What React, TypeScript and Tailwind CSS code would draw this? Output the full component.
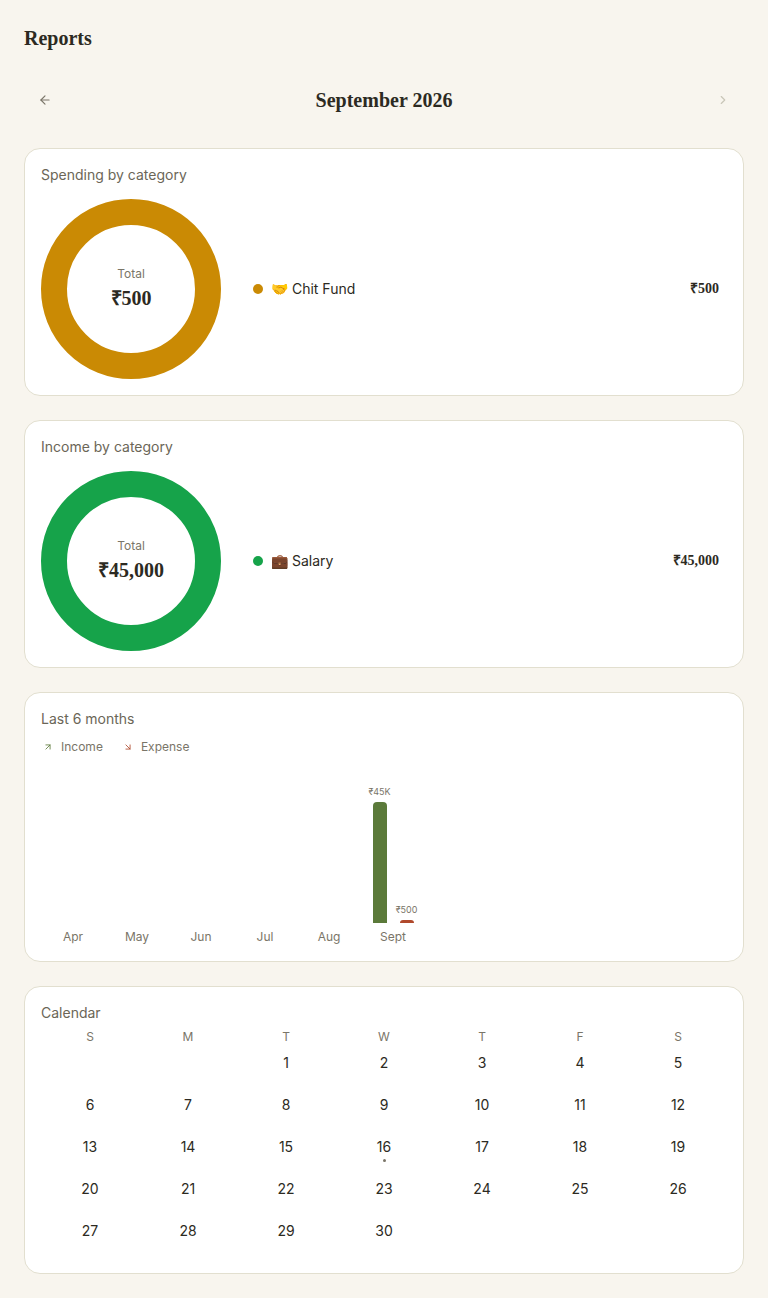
import { ArrowLeft, ArrowUpRight, ArrowDownRight, ChevronRight } from "lucide-react";

const serif = "font-['Liberation_Serif',serif]";

const months = ["Apr", "May", "Jun", "Jul", "Aug", "Sept"];
const days = ["S", "M", "T", "W", "T", "F", "S"];
const cells: (number | null)[] = [null, null, ...Array.from({ length: 30 }, (_, i) => i + 1)];

function Donut({ color, total, label, amount, emoji }: { color: string; total: string; label: string; amount: string; emoji: string }) {
  return (
    <div className="flex items-center">
      <div className="relative h-[180px] w-[180px] shrink-0">
        <svg width="180" height="180" viewBox="0 0 180 180">
          <circle cx="90" cy="90" r="77" fill="none" stroke={color} strokeWidth="26" />
        </svg>
        <div className="absolute inset-0 flex flex-col items-center justify-center">
          <span className="text-xs leading-4 text-[#7a7568]">Total</span>
          <span className={`${serif} mt-0.5 text-[20px] font-bold leading-7 text-[#2c2a22]`}>{total}</span>
        </div>
      </div>
      <div className="ml-8 flex flex-1 items-center pr-2 text-sm">
        <span className="h-2.5 w-2.5 rounded-full" style={{ backgroundColor: color }} />
        <span className="ml-2 text-[#2c2a22]">{emoji} {label}</span>
        <span className={`${serif} ml-auto font-bold text-[#2c2a22]`}>{amount}</span>
      </div>
    </div>
  );
}

function Card({ title, children }: { title: string; children: React.ReactNode }) {
  return (
    <section className="rounded-2xl border border-[#e2dfcf] bg-white p-4">
      <h2 className="text-sm leading-5 text-[#6b6657]">{title}</h2>
      {children}
    </section>
  );
}

export default function App() {
  return (
    <div className="min-h-[1298px] bg-[#f8f5ee] px-6 pt-6 font-['Inter',sans-serif]">
      <h1 className={`${serif} text-xl font-bold leading-7 text-[#2c2a22]`}>Reports</h1>

      <div className="mt-6 flex h-[48px] items-center justify-between px-3.5">
        <ArrowLeft size={14} className="text-[#7a7568]" />
        <span className={`${serif} text-xl font-bold text-[#2c2a22]`}>September 2026</span>
        <ChevronRight size={14} className="text-[#c9c6b8]" />
      </div>

      <div className="mt-6 flex flex-col gap-6">
        <Card title="Spending by category">
          <div className="mt-3.5">
            <Donut color="#ca8a04" total="₹500" label="Chit Fund" amount="₹500" emoji="🤝" />
          </div>
        </Card>

        <Card title="Income by category">
          <div className="mt-3.5">
            <Donut color="#16a34a" total="₹45,000" label="Salary" amount="₹45,000" emoji="💼" />
          </div>
        </Card>

        <Card title="Last 6 months">
          <div className="mt-2.5 flex items-center gap-5 pl-0.5 text-xs leading-4 text-[#7a7568]">
            <span className="flex items-center gap-2">
              <ArrowUpRight size={10} className="text-[#5b7a3a]" /> Income
            </span>
            <span className="flex items-center gap-2">
              <ArrowDownRight size={10} className="text-[#b0492c]" /> Expense
            </span>
          </div>
          <div className="mt-2 grid grid-cols-[repeat(6,64px)] ">
            {months.map((m) => (
              <div key={m} className="flex flex-col items-center">
                <div className="flex h-[160px] items-end justify-center gap-[13px]">
                  {m === "Sept" && (
                    <>
                      <div className="flex w-3.5 flex-col items-center">
                        <span className="mb-1 whitespace-nowrap text-[9px] leading-3 text-[#7a7568]">₹45K</span>
                        <div className="h-[121px] w-3.5 rounded-t-[4px] bg-[#5b7a3a]" />
                      </div>
                      <div className="flex w-3.5 flex-col items-center">
                        <span className="mb-1 whitespace-nowrap text-[9px] leading-3 text-[#7a7568]">₹500</span>
                        <div className="h-[3px] w-3.5 rounded-t-[4px] bg-[#b0492c]" />
                      </div>
                    </>
                  )}
                </div>
                <span className="mt-1.5 text-xs leading-4 text-[#7a7568]">{m}</span>
              </div>
            ))}
          </div>
        </Card>

        <Card title="Calendar">
          <div className="mt-1.5 grid grid-cols-7 text-center">
            {days.map((d, i) => (
              <span key={i} className="text-xs leading-4 text-[#7a7568]">{d}</span>
            ))}
          </div>
          <div className="mt-0.5 grid grid-cols-7 text-center">
            {cells.map((d, i) => (
              <div key={i} className="flex h-[42px] flex-col items-center pt-1.5 text-sm leading-5 text-[#2c2a22]">
                {d}
                {d === 16 && <span className="mt-0.5 h-[3px] w-[3px] rounded-full bg-[#7a7568]" />}
              </div>
            ))}
          </div>
        </Card>
      </div>
    </div>
  );
}
